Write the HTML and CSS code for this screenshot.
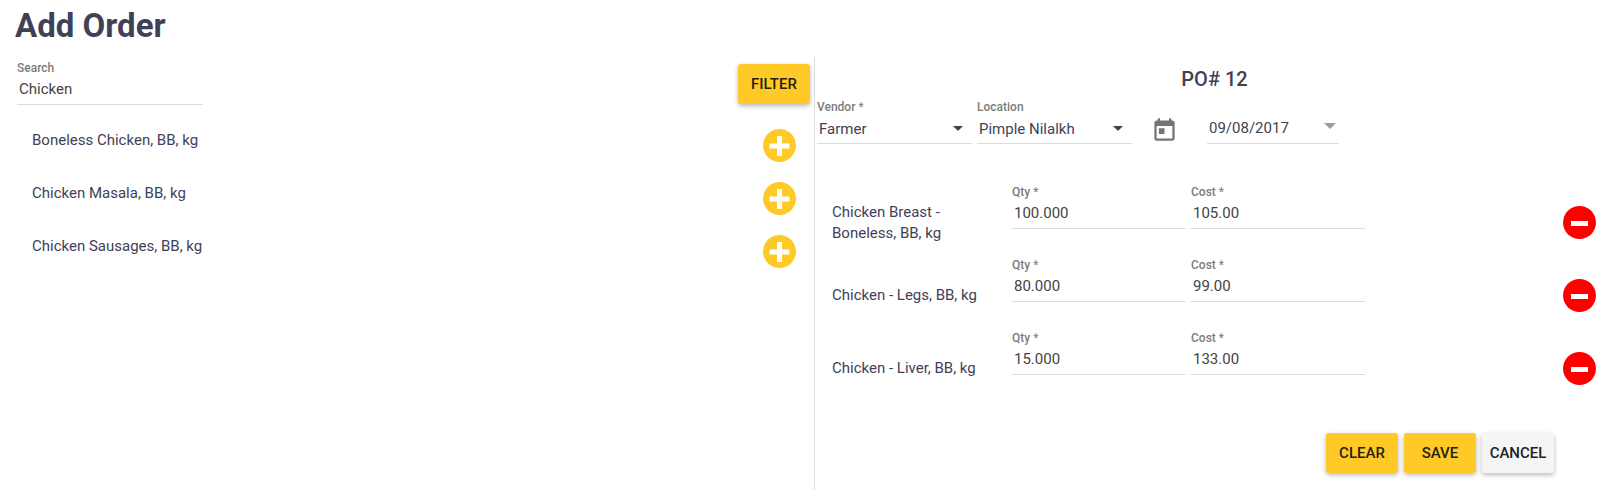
FILE: index.html
```
<!DOCTYPE html>
<html lang="en">

<head>
    <meta charset="UTF-8">
    <meta name="viewport" content="width=device-width, initial-scale=1.0">
    <title>Add Order</title>
    <link rel="stylesheet" href="styles.css">
</head>

<body>
    <svg class="sprite" aria-hidden="true">
        <symbol id="add" viewBox="0 0 33 33">
            <circle cx="16.5" cy="16.5" r="16.5" fill="#ffca28" />
            <path d="M14 7h5v7.5h7.5v5H19V27h-5v-7.500H6.500v-5H14z" fill="#fff" />
        </symbol>
        <symbol id="remove" viewBox="0 0 33 33">
            <circle cx="16.5" cy="16.5" r="16.5" fill="#f00" />
            <path d="M8 15h17v5H8z" fill="#fff" />
        </symbol>
    </svg>

    <h1>Add Order</h1>
    <main class="columns">
        <section class="catalog">
            <div class="catalog-bar">
                <div class="field search">
                    <label for="search">Search</label>
                    <input type="text" id="search" value="Chicken">
                </div>
                <button class="btn" type="button">FILTER</button>
            </div>
            <ul class="items">
                <li>
                    <span>Boneless Chicken, BB, kg</span>
                    <button class="icon-btn" type="button" aria-label="Add Boneless Chicken"><svg><use href="#add" /></svg></button>
                </li>
                <li>
                    <span>Chicken Masala, BB, kg</span>
                    <button class="icon-btn" type="button" aria-label="Add Chicken Masala"><svg><use href="#add" /></svg></button>
                </li>
                <li>
                    <span>Chicken Sausages, BB, kg</span>
                    <button class="icon-btn" type="button" aria-label="Add Chicken Sausages"><svg><use href="#add" /></svg></button>
                </li>
            </ul>
        </section>

        <form class="order">
            <h2>PO# 12</h2>
            <div class="order-info">
                <div class="field select">
                    <label for="vendor">Vendor <i>*</i></label>
                    <select id="vendor">
                        <option>Farmer</option>
                    </select>
                </div>
                <div class="field select">
                    <label for="location">Location</label>
                    <select id="location">
                        <option>Pimple Nilalkh</option>
                    </select>
                </div>
                <button class="calendar" type="button" aria-label="Open calendar">
                    <svg viewBox="0 0 24 24">
                        <path fill="#757575" d="M19 3h-1V1h-2v2H8V1H6v2H5c-1.11 0-1.99.9-1.99 2L3 19c0 1.1.89 2 2 2h14c1.1 0 2-.9 2-2V5c0-1.1-.9-2-2-2zm0 16H5V8h14v11zM7 10h5v5H7z" />
                    </svg>
                </button>
                <div class="field date">
                    <input type="text" aria-label="Date" value="09/08/2017">
                </div>
            </div>

            <div class="line">
                <span class="name">Chicken Breast - Boneless, BB, kg</span>
                <div class="field">
                    <label for="qty1">Qty <i>*</i></label>
                    <input type="text" id="qty1" value="100.000">
                </div>
                <div class="field">
                    <label for="cost1">Cost <i>*</i></label>
                    <input type="text" id="cost1" value="105.00">
                </div>
                <button class="icon-btn" type="button" aria-label="Remove Chicken Breast"><svg><use href="#remove" /></svg></button>
            </div>
            <div class="line">
                <span class="name">Chicken - Legs, BB, kg</span>
                <div class="field">
                    <label for="qty2">Qty <i>*</i></label>
                    <input type="text" id="qty2" value="80.000">
                </div>
                <div class="field">
                    <label for="cost2">Cost <i>*</i></label>
                    <input type="text" id="cost2" value="99.00">
                </div>
                <button class="icon-btn" type="button" aria-label="Remove Chicken Legs"><svg><use href="#remove" /></svg></button>
            </div>
            <div class="line">
                <span class="name">Chicken - Liver, BB, kg</span>
                <div class="field">
                    <label for="qty3">Qty <i>*</i></label>
                    <input type="text" id="qty3" value="15.000">
                </div>
                <div class="field">
                    <label for="cost3">Cost <i>*</i></label>
                    <input type="text" id="cost3" value="133.00">
                </div>
                <button class="icon-btn" type="button" aria-label="Remove Chicken Liver"><svg><use href="#remove" /></svg></button>
            </div>

            <div class="actions">
                <button class="btn" type="button">CLEAR</button>
                <button class="btn" type="button">SAVE</button>
                <button class="btn cancel" type="button">CANCEL</button>
            </div>
        </form>
    </main>
</body>

</html>
```
FILE: styles.css
```
* {
    box-sizing: border-box;
}

body {
    margin: 0;
    padding-left: 8px;
    min-height: 100vh;
    display: flex;
    flex-direction: column;
    font-family: Roboto, sans-serif;
    font-size: 15px;
    line-height: 21px;
    color: #3f4257;
}

.sprite {
    display: none;
}

h1 {
    margin: 6px 7px 11px;
    font-size: 33px;
    line-height: 40px;
    font-weight: 700;
}

h2 {
    margin: 0;
    padding: 8px 8px 0 0;
    font-size: 20px;
    line-height: 28px;
    font-weight: 500;
    text-align: center;
}

.columns {
    flex: 1;
    display: grid;
    grid-template-columns: 1fr 1fr;
}

.catalog {
    border-right: 1px solid #dcdcdc;
}

.catalog-bar {
    display: flex;
    justify-content: space-between;
    padding: 3px 4px 0 9px;
}

.search {
    width: 186px;
}

.field {
    display: flex;
    flex-direction: column;
    border-bottom: 1px solid #dcdcdc;
}

.field label {
    font-size: 12px;
    line-height: 16px;
    font-weight: 500;
    color: #7c7c7c;
}

.field i {
    font-style: normal;
    font-weight: 400;
}

.field input,
.field select {
    width: 100%;
    height: 28px;
    padding: 0 2px 2px;
    border: 0;
    outline: 0;
    background: none;
    appearance: none;
    font: inherit;
    color: #444;
}

.field select {
    padding-bottom: 0;
    color: #3f4257;
}

.btn {
    min-width: 72px;
    height: 40px;
    padding: 0 6px;
    border: 0;
    border-radius: 3px;
    background: #ffca28;
    box-shadow: 0 2px 5px rgba(0, 0, 0, .28);
    font: 500 15px Roboto, sans-serif;
    color: #262210;
    cursor: pointer;
}

.cancel {
    background: #f5f5f5;
    color: #222;
}

.catalog-bar .btn {
    margin-top: 4px;
}

.icon-btn {
    width: 33px;
    height: 33px;
    padding: 0;
    border: 0;
    background: none;
    cursor: pointer;
}

.icon-btn svg {
    display: block;
    width: 33px;
    height: 33px;
}

.items {
    list-style: none;
    margin: 0;
    padding: 24px 18px 0 24px;
}

.items li {
    display: flex;
    justify-content: space-between;
    height: 53px;
}

.items span {
    padding-top: 1px;
}

.order-info {
    display: flex;
    align-items: flex-end;
    margin-bottom: 40px;
    padding: 6px 2px 0;
}

.select {
    position: relative;
    width: 155px;
    margin-right: 5px;
}

.select::after,
.date::after {
    content: "";
    position: absolute;
    right: 9px;
    bottom: 12px;
    border: 5px solid transparent;
    border-top-color: #3f4257;
    border-bottom: 0;
}

.calendar {
    width: 27px;
    height: 27px;
    margin: 0 29px 0 14px;
    padding: 0;
    border: 0;
    background: none;
    cursor: pointer;
}

.calendar svg {
    display: block;
}

.date {
    position: relative;
    width: 132px;
}

.date::after {
    right: 3px;
    bottom: 14px;
    border-width: 6px;
    border-top-color: #9e9e9e;
    border-bottom: 0;
}

.line {
    display: flex;
    align-items: center;
    height: 73px;
    padding: 0 26px 0 17px;
}

.name {
    flex: 1;
    max-width: 180px;
    padding: 4px 24px 0 0;
}

.line .field {
    align-self: flex-start;
    width: 174px;
    margin-right: 5px;
}

.line .icon-btn {
    margin: 4px 0 0 auto;
}

.actions {
    display: flex;
    justify-content: flex-end;
    gap: 6px;
    padding: 30px 68px 16px 0;
}
```
